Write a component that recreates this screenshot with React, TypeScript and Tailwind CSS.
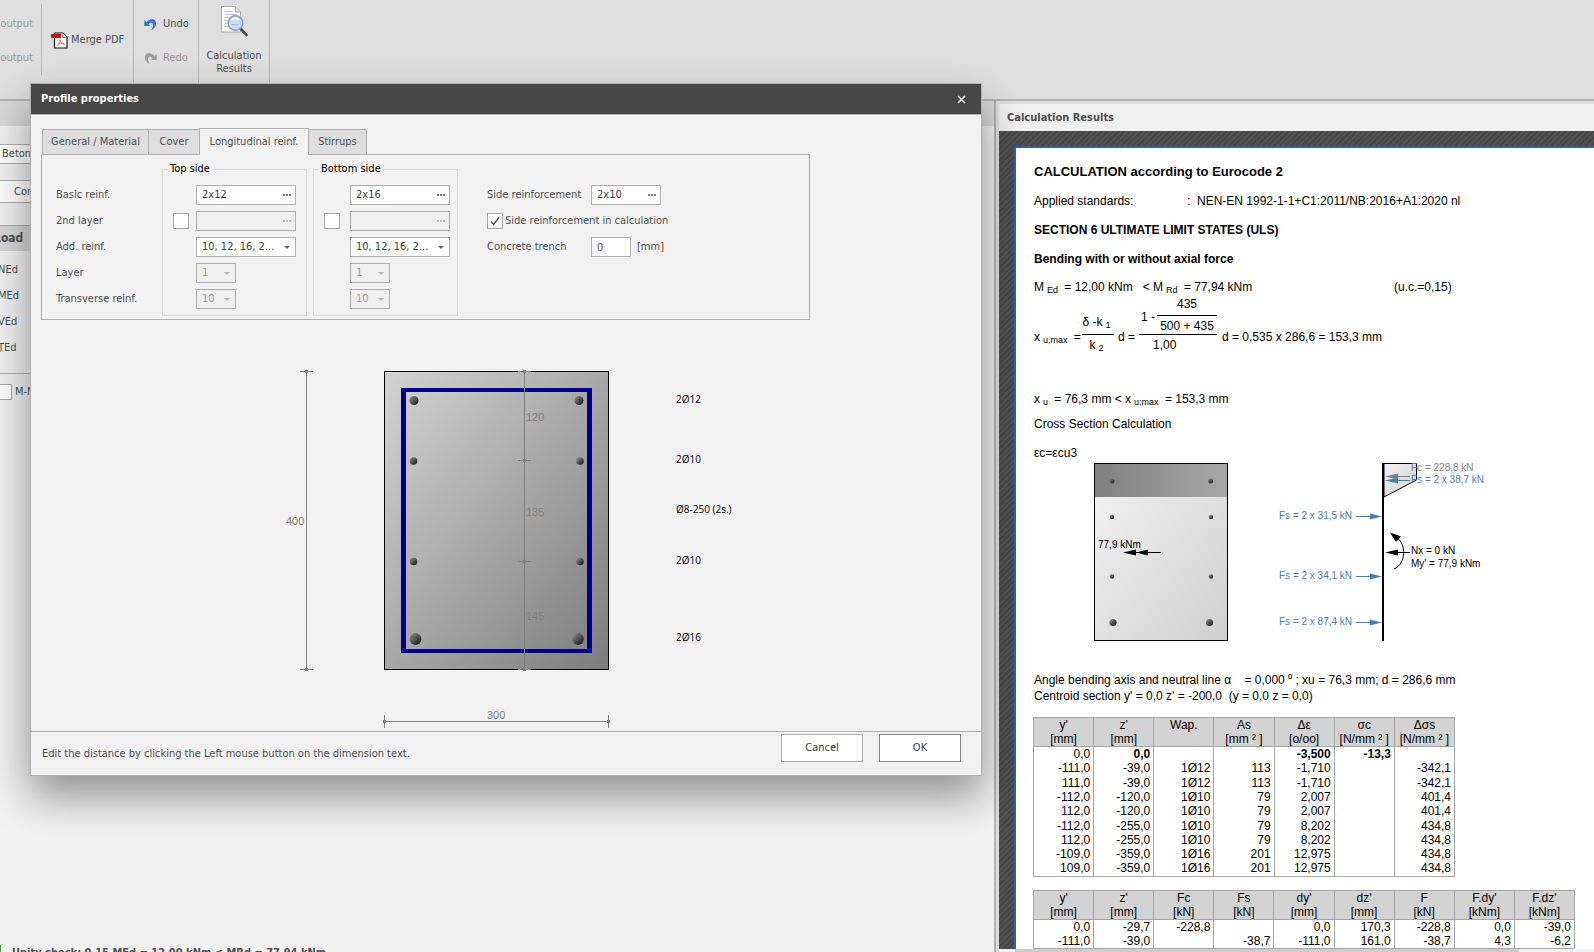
import type { ReactNode } from "react";

const barLabels = [
  { text: "2Ø12", y: 403 },
  { text: "2Ø10", y: 463 },
  { text: "Ø8-250 (2s.)", y: 513 },
  { text: "2Ø10", y: 564 },
  { text: "2Ø16", y: 641 },
];

const strainHead = [
  ["y'", "[mm]"],
  ["z'", "[mm]"],
  ["Wap.", ""],
  ["As", "[mm ² ]"],
  ["Δε", "[o/oo]"],
  ["σc", "[N/mm ² ]"],
  ["Δσs", "[N/mm ² ]"],
];

const strainRows = [
  ["0,0", "0,0", "", "", "-3,500", "-13,3", ""],
  ["-111,0", "-39,0", "1Ø12", "113", "-1,710", "", "-342,1"],
  ["111,0", "-39,0", "1Ø12", "113", "-1,710", "", "-342,1"],
  ["-112,0", "-120,0", "1Ø10", "79", "2,007", "", "401,4"],
  ["112,0", "-120,0", "1Ø10", "79", "2,007", "", "401,4"],
  ["-112,0", "-255,0", "1Ø10", "79", "8,202", "", "434,8"],
  ["112,0", "-255,0", "1Ø10", "79", "8,202", "", "434,8"],
  ["-109,0", "-359,0", "1Ø16", "201", "12,975", "", "434,8"],
  ["109,0", "-359,0", "1Ø16", "201", "12,975", "", "434,8"],
];

const forceHead = [
  ["y'", "[mm]"],
  ["z'", "[mm]"],
  ["Fc", "[kN]"],
  ["Fs", "[kN]"],
  ["dy'", "[mm]"],
  ["dz'", "[mm]"],
  ["F", "[kN]"],
  ["F.dy'", "[kNm]"],
  ["F.dz'", "[kNm]"],
];

const forceRows = [
  ["0,0", "-29,7", "-228,8", "", "0,0", "170,3", "-228,8", "0,0", "-39,0"],
  ["-111,0", "-39,0", "", "-38,7", "-111,0", "161,0", "-38,7", "4,3", "-6,2"],
];

const PdfIcon = () => (
  <svg width="17" height="17" viewBox="0 0 17 17">
    <path d="M3.500 1h8.500l4 4v11H3.500z" fill="#fff" stroke="#111" strokeWidth="1.200" />
    <path d="M11.500 1v4.500H16" fill="#e8e8e8" stroke="#777" strokeWidth="0.800" />
    <rect x="0" y="2" width="10" height="4" fill="#c41010" />
    <path
      d="M8.800 7.500c.4 2.500 2 4.400 5.200 5M9.300 7.600c0 2.500-1 4.800-3.600 6.400M6.800 12c2-.7 4.200-.9 6.200-.4"
      fill="none"
      stroke="#e86060"
      strokeWidth="0.900"
    />
  </svg>
);

const UndoIcon = ({ redo }: { redo?: boolean }) => (
  <svg
    width="13"
    height="13"
    viewBox="0 0 13 13"
    className={redo ? "-scale-x-100 text-[#9c9c9c]" : "text-[#3f6fd0]"}
  >
    <path
      d="M0.300 2v6h6L4.500 6.200C6.500 3.800 9.200 4.200 9 7.500c-.1 1.700-.8 3.200-2.300 4.900 3.200-1.200 5.300-3.600 5.400-6.800C12.200 .8 6.500-.5 2.500 4.200z"
      fill="currentColor"
    />
  </svg>
);

const ResultsIcon = () => (
  <svg width="30" height="32" viewBox="0 0 30 32">
    <path d="M2.500 0.500h14l5 5.500v20h-19z" fill="#fdfdfd" stroke="#a9a9a9" />
    <path d="M16.500 0.500v5.500h5" fill="#e4e4e4" stroke="#a9a9a9" />
    <path d="M5.500 5.500h8M5.500 8.500h12M5.500 11.500h7M5.500 14.500h4M5.500 17.500h4M5.500 20.500h6" stroke="#b9c2cc" />
    <path d="M21.500 22.500l6 6.500" stroke="#4a4a4a" strokeWidth="2.600" strokeLinecap="round" />
    <circle cx="16.500" cy="17" r="7.300" fill="#c3d8f4" fillOpacity="0.900" stroke="#8d9db5" strokeWidth="1.500" />
    <path d="M12 15c1.500-2.500 5-3.500 8-1.500" stroke="#fff" strokeWidth="1.500" fill="none" />
    <path d="M12.500 18.500h7" stroke="#9db6dc" />
  </svg>
);

const Ribbon = () => (
  <header className="h-[101px] shrink-0 flex border-b-2 border-[#b2b2b2] bg-[#dfdfdf] text-[#505050]">
    <div className="mt-1 mb-6 w-[42px] flex flex-col items-end gap-5 border-r border-[#b8b8b8] pr-2 pt-[13px] text-[#9a9a9a]">
      <span>output</span>
      <span>output</span>
    </div>
    <button className="w-[91px] h-20 flex items-center gap-[3px] pl-[9px]">
      <PdfIcon />
      Merge PDF
    </button>
    <div className="w-[66px] flex flex-col gap-5 border-x border-[#b8b8b8] pl-2.5 pt-[17px]">
      <button className="flex items-center gap-1.5">
        <UndoIcon />
        Undo
      </button>
      <button className="flex items-center gap-1.5 text-[#9a9a9a]" disabled>
        <UndoIcon redo />
        Redo
      </button>
    </div>
    <button className="w-[71px] flex flex-col items-center border-r border-[#b8b8b8] pt-1.5 leading-[13px]">
      <ResultsIcon />
      <span className="mt-[11px]">
        Calculation
        <br />
        Results
      </span>
    </button>
  </header>
);

const LoadPanel = () => (
  <section className="relative w-[996px] shrink-0 overflow-hidden border-r-2 border-[#b2b2b2] bg-[#f1f1f1] text-[#505050]">
    <div className="h-[25px] bg-[#d9d9d9]" />
    <div className="w-40">
      <div className="mt-[18px] h-5 border-y border-[#b0b0b0] bg-white pl-0.5 leading-[18px]">Beton</div>
      <div className="mt-4 h-[23px] border-y border-[#b0b0b0] bg-white pl-3.5 leading-[21px]">Concrete</div>
      <div className="mt-[22px] h-[26px] border-t border-[#b0b0b0] bg-[#d7d7d7] text-[12px] font-bold leading-6 -indent-1.5">
        Load
      </div>
      <ul className="mt-1.5 leading-[26px] -indent-0.5">
        <li>NEd</li>
        <li>MEd</li>
        <li>VEd</li>
        <li>TEd</li>
      </ul>
      <label className="mt-3 flex items-center border-t border-[#b0b0b0] pt-2.5 gap-[3px]">
        <input type="checkbox" className="-ml-1 size-4 appearance-none border border-[#a8a8a8] bg-white" />
        M-N
      </label>
    </div>
    <p className="absolute left-0 top-[844px] flex gap-[11px] whitespace-nowrap font-bold leading-4">
      <i className="w-px bg-[#4e9a2e]" />
      Unity check: 0,15 MEd = 12,00 kNm &lt; MRd = 77,94 kNm
    </p>
  </section>
);

const PickField = ({ label, value, disabled }: { label: string; value: string; disabled?: boolean }) => (
  <div className={`h-5 w-full flex items-center border border-[#b0b0b0] ${disabled ? "bg-[#f0f0f0]" : "bg-white"}`}>
    <input
      aria-label={label}
      defaultValue={value}
      disabled={disabled}
      className="w-0 grow pl-[5px] text-[#404040] outline-none"
    />
    <button
      aria-label={`${label} options`}
      disabled={disabled}
      className={`flex gap-px px-1 ${disabled ? "text-[#c4c4c4]" : "text-[#777]"}`}
    >
      <i className="size-0.5 bg-current" />
      <i className="size-0.5 bg-current" />
      <i className="size-0.5 bg-current" />
    </button>
  </div>
);

const Combo = ({ label, value, disabled }: { label: string; value: string; disabled?: boolean }) => (
  <div className={`relative ${disabled ? "w-10 text-[#a0a0a0]" : "w-full text-[#404040]"}`}>
    <select
      aria-label={label}
      disabled={disabled}
      className={`block h-5 w-full appearance-none border border-[#b0b0b0] pl-[5px] opacity-100 ${
        disabled ? "bg-[#f0f0f0]" : "bg-white"
      }`}
    >
      <option>{value}</option>
    </select>
    <svg width="6" height="3" className="pointer-events-none absolute right-1.5 top-[9px]">
      <path d="M0 0h6L3 3z" fill={disabled ? "#b8b8b8" : "#666"} />
    </svg>
  </div>
);

const SideGroup = ({ title, basic, className }: { title: string; basic: string; className: string }) => (
  <fieldset className={`w-[145px] border border-[#dadada] pb-[3px] ${className}`}>
    <legend className="-ml-[5px] px-0.5 leading-[14px] text-black">{title}</legend>
    <div className="mt-1.5 grid grid-cols-[16px_100px] auto-rows-[26px] items-center justify-between">
      <span />
      <PickField label={`${title} basic`} value={basic} />
      <input
        type="checkbox"
        aria-label={`${title} 2nd layer`}
        className="size-4 appearance-none border border-[#a8a8a8] bg-white"
      />
      <PickField label={`${title} 2nd layer bars`} value="" disabled />
      <span />
      <Combo label={`${title} additional`} value="10, 12, 16, 2..." />
      <span />
      <Combo label={`${title} layer`} value="1" disabled />
      <span />
      <Combo label={`${title} transverse`} value="10" disabled />
    </div>
  </fieldset>
);

const Tabs = () => (
  <div role="tablist" className="ml-px flex items-end text-[#505050]">
    <button role="tab" className="h-[25px] w-[107px] border border-b-0 border-[#b0b0b0] bg-[#dedede]">
      General / Material
    </button>
    <button role="tab" className="h-[25px] w-[50px] border-t border-[#b0b0b0] bg-[#dedede]">
      Cover
    </button>
    <button
      role="tab"
      aria-selected="true"
      className="relative -mb-px h-[27px] w-[110px] border border-b-0 border-[#b0b0b0] bg-[#f2f2f2]"
    >
      Longitudinal reinf.
    </button>
    <button role="tab" className="h-[25px] w-[58px] border border-l-0 border-b-0 border-[#b0b0b0] bg-[#dedede]">
      Stirrups
    </button>
  </div>
);

const ReinforcementForm = () => (
  <form className="h-[166px] w-[769px] flex border border-[#b0b0b0] pt-[7px] pl-3.5 text-[#404040]">
    <div className="w-[106px] pt-5 leading-[26px] text-[#505050]">
      <p>Basic reinf.</p>
      <p>2nd layer</p>
      <p>Add. reinf.</p>
      <p>Layer</p>
      <p>Transverse reinf.</p>
    </div>
    <div className="flex items-start gap-1.5">
      <SideGroup title="Top side" basic="2x12" className="px-2.5" />
      <SideGroup title="Bottom side" basic="2x16" className="pl-2.5 pr-[7px]" />
    </div>
    <div className="ml-[29px] pt-5 text-[#505050]">
      <div className="h-[26px] flex items-center">
        <span className="w-[104px]">Side reinforcement</span>
        <div className="w-[70px]">
          <PickField label="Side reinforcement" value="2x10" />
        </div>
      </div>
      <label className="h-[26px] flex items-center gap-0.5">
        <span className="relative size-4">
          <input type="checkbox" defaultChecked className="block size-4 appearance-none border border-[#a8a8a8] bg-white" />
          <svg width="16" height="16" className="pointer-events-none absolute inset-0">
            <path d="M4 8.500l2.500 3L12 4.500" fill="none" stroke="#444" strokeWidth="1.300" />
          </svg>
        </span>
        Side reinforcement in calculation
      </label>
      <div className="h-[26px] flex items-center">
        <label htmlFor="trench" className="w-[104px]">
          Concrete trench
        </label>
        <input id="trench" defaultValue="0" className="h-5 w-10 border border-[#b0b0b0] bg-white pl-[5px]" />
        <span className="ml-1.5">[mm]</span>
      </div>
    </div>
  </form>
);

const SectionDrawing = () => (
  <svg width="480" height="370" viewBox="270 361 480 370" className="ml-[229px] mt-[41px] block">
    <defs>
      <linearGradient id="concrete" x1="0" y1="0" x2="1" y2="1">
        <stop offset="0" stopColor="#d4d4d4" />
        <stop offset="1" stopColor="#7c7c7c" />
      </linearGradient>
      <linearGradient id="steel" x1="0" y1="0" x2="1" y2="1">
        <stop offset="0.100" stopColor="#888" />
        <stop offset="0.900" stopColor="#1c1c1c" />
      </linearGradient>
    </defs>
    <rect x="384.500" y="371.500" width="224" height="298" fill="url(#concrete)" stroke="#000" />
    <path fillRule="evenodd" d="M401 388h191v265H401zM406 392v257h181V392z" fill="#00008b" />
    <g fill="url(#steel)">
      <circle cx="414" cy="400.500" r="4.500" />
      <circle cx="579" cy="400.500" r="4.500" />
      <circle cx="413.500" cy="461" r="3.800" />
      <circle cx="580" cy="461" r="3.800" />
      <circle cx="413.500" cy="561.500" r="3.800" />
      <circle cx="580" cy="561.500" r="3.800" />
      <circle cx="415.500" cy="639" r="5.900" />
      <circle cx="578" cy="639" r="5.900" />
    </g>
    <g stroke="#808080">
      <path d="M306.500 371.500v298M300 371.500h13M300 669.500h13" />
      <path d="M524.500 371.500v298M518 371.500h13M518 460.500h13M518 561.500h13M518 669.500h13" />
      <path d="M384.500 721.500h224M384.500 715v13M608.500 715v13" />
    </g>
    <g fill="#808080">
      <path d="M305 370h3v3h-3zM305 668h3v3h-3zM523 370h3v3h-3zM523 459h3v3h-3zM523 560h3v3h-3zM523 668h3v3h-3zM383 720h3v3h-3zM607 720h3v3h-3z" />
    </g>
    <g fill="#808080" className="font-['Liberation_Sans'] text-[11px]">
      <text x="286" y="525">400</text>
      <text x="487" y="719">300</text>
      <text x="526" y="421">120</text>
      <text x="526" y="516">135</text>
      <text x="526" y="620">145</text>
    </g>
    <g fill="#000" className="font-['Open_Sans'] text-[10px]">
      {barLabels.map((bar) => (
        <text key={bar.y} x="676" y={bar.y}>
          {bar.text}
        </text>
      ))}
    </g>
  </svg>
);

const ProfileDialog = () => (
  <div
    role="dialog"
    aria-label="Profile properties"
    className="absolute left-[30px] top-[83px] h-[693px] w-[952px] flex flex-col border border-[#b0b0b0] bg-[#f2f2f2] shadow-[0_20px_40px_rgba(0,0,0,0.4)]"
  >
    <div className="h-[31px] shrink-0 flex items-center justify-between border-b border-[#b0b0b0] bg-[#464646] px-2.5 font-bold text-white">
      Profile properties
      <button aria-label="Close" className="px-[5px]">
        <svg width="9" height="9">
          <path d="M1 1l7 7M8 1L1 8" stroke="#fff" strokeWidth="1.600" />
        </svg>
      </button>
    </div>
    <div className="grow border-b border-[#b0b0b0] pl-2.5 pt-[13px]">
      <Tabs />
      <ReinforcementForm />
      <SectionDrawing />
    </div>
    <footer className="h-[43px] shrink-0 flex items-start justify-between pl-[11px] pr-5 pt-0.5 text-[#505050]">
      <p className="pt-[13px]">Edit the distance by clicking the Left mouse button on the dimension text.</p>
      <div className="flex gap-4 text-[#404040]">
        <button className="h-7 w-[82px] border border-[#b0b0b0] bg-white">Cancel</button>
        <button className="h-7 w-[82px] border border-[#858585] bg-white">OK</button>
      </div>
    </footer>
  </div>
);

const Sub = ({ children }: { children: ReactNode }) => (
  <sub className="bottom-0 top-0.5 mx-[3px] text-[9px] leading-none">{children}</sub>
);

const MaxFormula = () => (
  <div className="h-[58px] flex items-end leading-4">
    <p className="mb-2 w-12 whitespace-nowrap">
      x<Sub>u,max</Sub> =
    </p>
    <div className="w-8 text-center">
      <p className="border-b border-black pb-1">
        δ -k<Sub>1</Sub>
      </p>
      <p className="h-[18px] pt-0.5">
        k<Sub>2</Sub>
      </p>
    </div>
    <p className="mb-2 w-[25px] text-center">d =</p>
    <div className="w-[78px]">
      <div className="flex items-start justify-between border-b border-black">
        <p className="pl-0.5 pt-3">1 -</p>
        <div className="w-[60px] text-center">
          <p className="border-b border-black pb-1 leading-[14px]">435</p>
          <p className="pt-0.5">500 + 435</p>
        </div>
      </div>
      <p className="h-[18px] pl-3.5 pt-0.5">1,00</p>
    </div>
    <p className="mb-2 ml-[5px]">d = 0,535 x 286,6 = 153,3 mm</p>
  </div>
);

const ForceDiagram = () => (
  <svg width="420" height="180" viewBox="1085 462 420 180" className="ml-[51px] block">
    <defs>
      <linearGradient id="light" x1="0" y1="0" x2="1" y2="1">
        <stop offset="0" stopColor="#f4f4f4" />
        <stop offset="1" stopColor="#cfcfcf" />
      </linearGradient>
      <linearGradient id="dark" x1="0" y1="0" x2="1" y2="0">
        <stop offset="0" stopColor="#808080" />
        <stop offset="1" stopColor="#a8a8a8" />
      </linearGradient>
    </defs>
    <rect x="1094.500" y="463.500" width="133" height="177" fill="url(#light)" />
    <rect x="1095" y="464" width="132" height="33" fill="url(#dark)" />
    <rect x="1094.500" y="463.500" width="133" height="177" fill="none" stroke="#000" />
    <g fill="url(#steel)">
      <circle cx="1112" cy="481" r="2.500" />
      <circle cx="1210.500" cy="481" r="2.500" />
      <circle cx="1112" cy="517" r="2.200" />
      <circle cx="1211" cy="517" r="2.200" />
      <circle cx="1112" cy="576.500" r="2.200" />
      <circle cx="1211" cy="576.500" r="2.200" />
      <circle cx="1113" cy="622.500" r="3.600" />
      <circle cx="1209.500" cy="622.500" r="3.600" />
    </g>
    <path d="M1384 463.500h32.500v16.500l-32.500 17z" fill="url(#light)" stroke="#000" />
    <path d="M1383 463v178" stroke="#000" strokeWidth="2" />
    <g stroke="#000" fill="none">
      <path d="M1136 552.500h25M1397 552.500h13M1394 569c12-5 13-25 2-32" />
    </g>
    <path d="M1123 552.500l13-3v6zM1136 552.500l12-3v6zM1385 552.500l13-3v6zM1390 532.500l11 4-5 5.500z" />
    <path d="M1397 476.500h13" stroke="#808080" />
    <path d="M1385 476.500l13-3v6z" fill="#808080" />
    <path d="M1397 480.500h13M1356 516.500h16M1356 576.500h16M1356 622.500h16" stroke="#4682b4" />
    <path d="M1385 480.500l13-3v6zM1382 516.500l-12-3v6zM1382 576.500l-12-3v6zM1382 622.500l-12-3v6z" fill="#4682b4" />
    <g className="font-['Liberation_Sans'] text-[10px]">
      <text x="1098" y="548">77,9 kNm</text>
      <text x="1411" y="554">Nx = 0 kN</text>
      <text x="1411" y="567">My' = 77,9 kNm</text>
      <text x="1411" y="471" fill="#808080">Fc = 228,8 kN</text>
      <g fill="#4682b4">
        <text x="1411" y="483">Fs = 2 x 38,7 kN</text>
        <text x="1279" y="519">Fs = 2 x 31,5 kN</text>
        <text x="1279" y="579">Fs = 2 x 34,1 kN</text>
        <text x="1279" y="625">Fs = 2 x 87,4 kN</text>
      </g>
    </g>
  </svg>
);

const ResultTable = ({ head, rows, className }: { head: string[][]; rows: string[][]; className: string }) => (
  <table className={`-ml-px table-fixed border-collapse border border-[#a6a6a6] ${className}`}>
    <thead className="border-b border-[#a6a6a6] bg-[#d3d3d3]">
      <tr>
        {head.map(([name, unit], i) => (
          <th key={i} className="h-[29px] border-x border-[#a6a6a6] p-0 align-top font-normal leading-[14px] whitespace-nowrap">
            {name}
            <br />
            {unit}
          </th>
        ))}
      </tr>
    </thead>
    <tbody>
      {rows.map((row, r) => (
        <tr key={r} className="h-[14px] nth-[3n]:h-[15px]">
          {row.map((cell, c) => (
            <td
              key={c}
              className={`border-x border-[#a6a6a6] p-0 pr-[3px] text-right leading-[14px] ${
                rows === strainRows && r === 0 && c > 0 ? "font-bold" : ""
              }`}
            >
              {cell}
            </td>
          ))}
        </tr>
      ))}
    </tbody>
  </table>
);

const ResultsPanel = () => (
  <section className="ml-[3px] mt-[3px] grow flex flex-col overflow-hidden">
    <h2 className="h-[27px] shrink-0 bg-[#f1f1f1] pl-2 font-bold leading-[27px] text-[#505050]">Calculation Results</h2>
    <div className="grow overflow-hidden bg-[repeating-linear-gradient(135deg,#474747_0_2px,#525252_2px_4px)] pl-[15px] pt-[15px]">
      <article className="h-[805px] overflow-hidden whitespace-nowrap border-l-2 border-t-2 border-[#2f5f9f] bg-white pl-[18px] pt-4 font-['Liberation_Sans'] text-[12px] leading-4 text-black">
        <h1 className="text-[13px] font-bold">CALCULATION according to Eurocode 2</h1>
        <p className="mt-[13px] flex">
          <span className="w-[153px]">Applied standards:</span>: &nbsp;NEN-EN 1992-1-1+C1:2011/NB:2016+A1:2020 nl
        </p>
        <h2 className="mt-[13px] font-bold">SECTION 6 ULTIMATE LIMIT STATES (ULS)</h2>
        <h3 className="mt-[13px] font-bold">Bending with or without axial force</h3>
        <p className="mt-3 flex">
          <span className="w-[360px]">
            M<Sub>Ed</Sub> = 12,00 kNm &nbsp; &lt; M<Sub>Rd</Sub> = 77,94 kNm
          </span>
          (u.c.=0,15)
        </p>
        <MaxFormula />
        <p className="mt-[38px]">
          x<Sub>u</Sub> = 76,3 mm &lt; x<Sub>u;max</Sub> = 153,3 mm
        </p>
        <p className="mt-[9px]">Cross Section Calculation</p>
        <p className="mb-px mt-[13px]">εc=εcu3</p>
        <ForceDiagram />
        <p className="mt-[30px]">
          Angle bending axis and neutral line α &nbsp; &nbsp;= 0,000 ⁰ ; xu = 76,3 mm; d = 286,6 mm
        </p>
        <p>Centroid section y' = 0,0 z' = -200,0 &nbsp;(y = 0,0 z = 0,0)</p>
        <div className="mt-[13px] flex flex-col gap-[13px]">
          <ResultTable head={strainHead} rows={strainRows} className="w-[422px]" />
          <ResultTable head={forceHead} rows={forceRows} className="w-[542px]" />
        </div>
      </article>
    </div>
    <div className="h-[3px] shrink-0 bg-[#f1f1f1]">
      <div className="ml-4 mr-[75px] h-full bg-[#cdcdcd]" />
    </div>
  </section>
);

export default function App() {
  return (
    <div className="relative h-screen flex flex-col overflow-hidden bg-[#dfdfdf] font-['DejaVu_Sans_Condensed','Noto_Sans',sans-serif] text-[11px] leading-[14px]">
      <Ribbon />
      <main className="grow flex overflow-hidden">
        <LoadPanel />
        <ResultsPanel />
      </main>
      <ProfileDialog />
    </div>
  );
}
